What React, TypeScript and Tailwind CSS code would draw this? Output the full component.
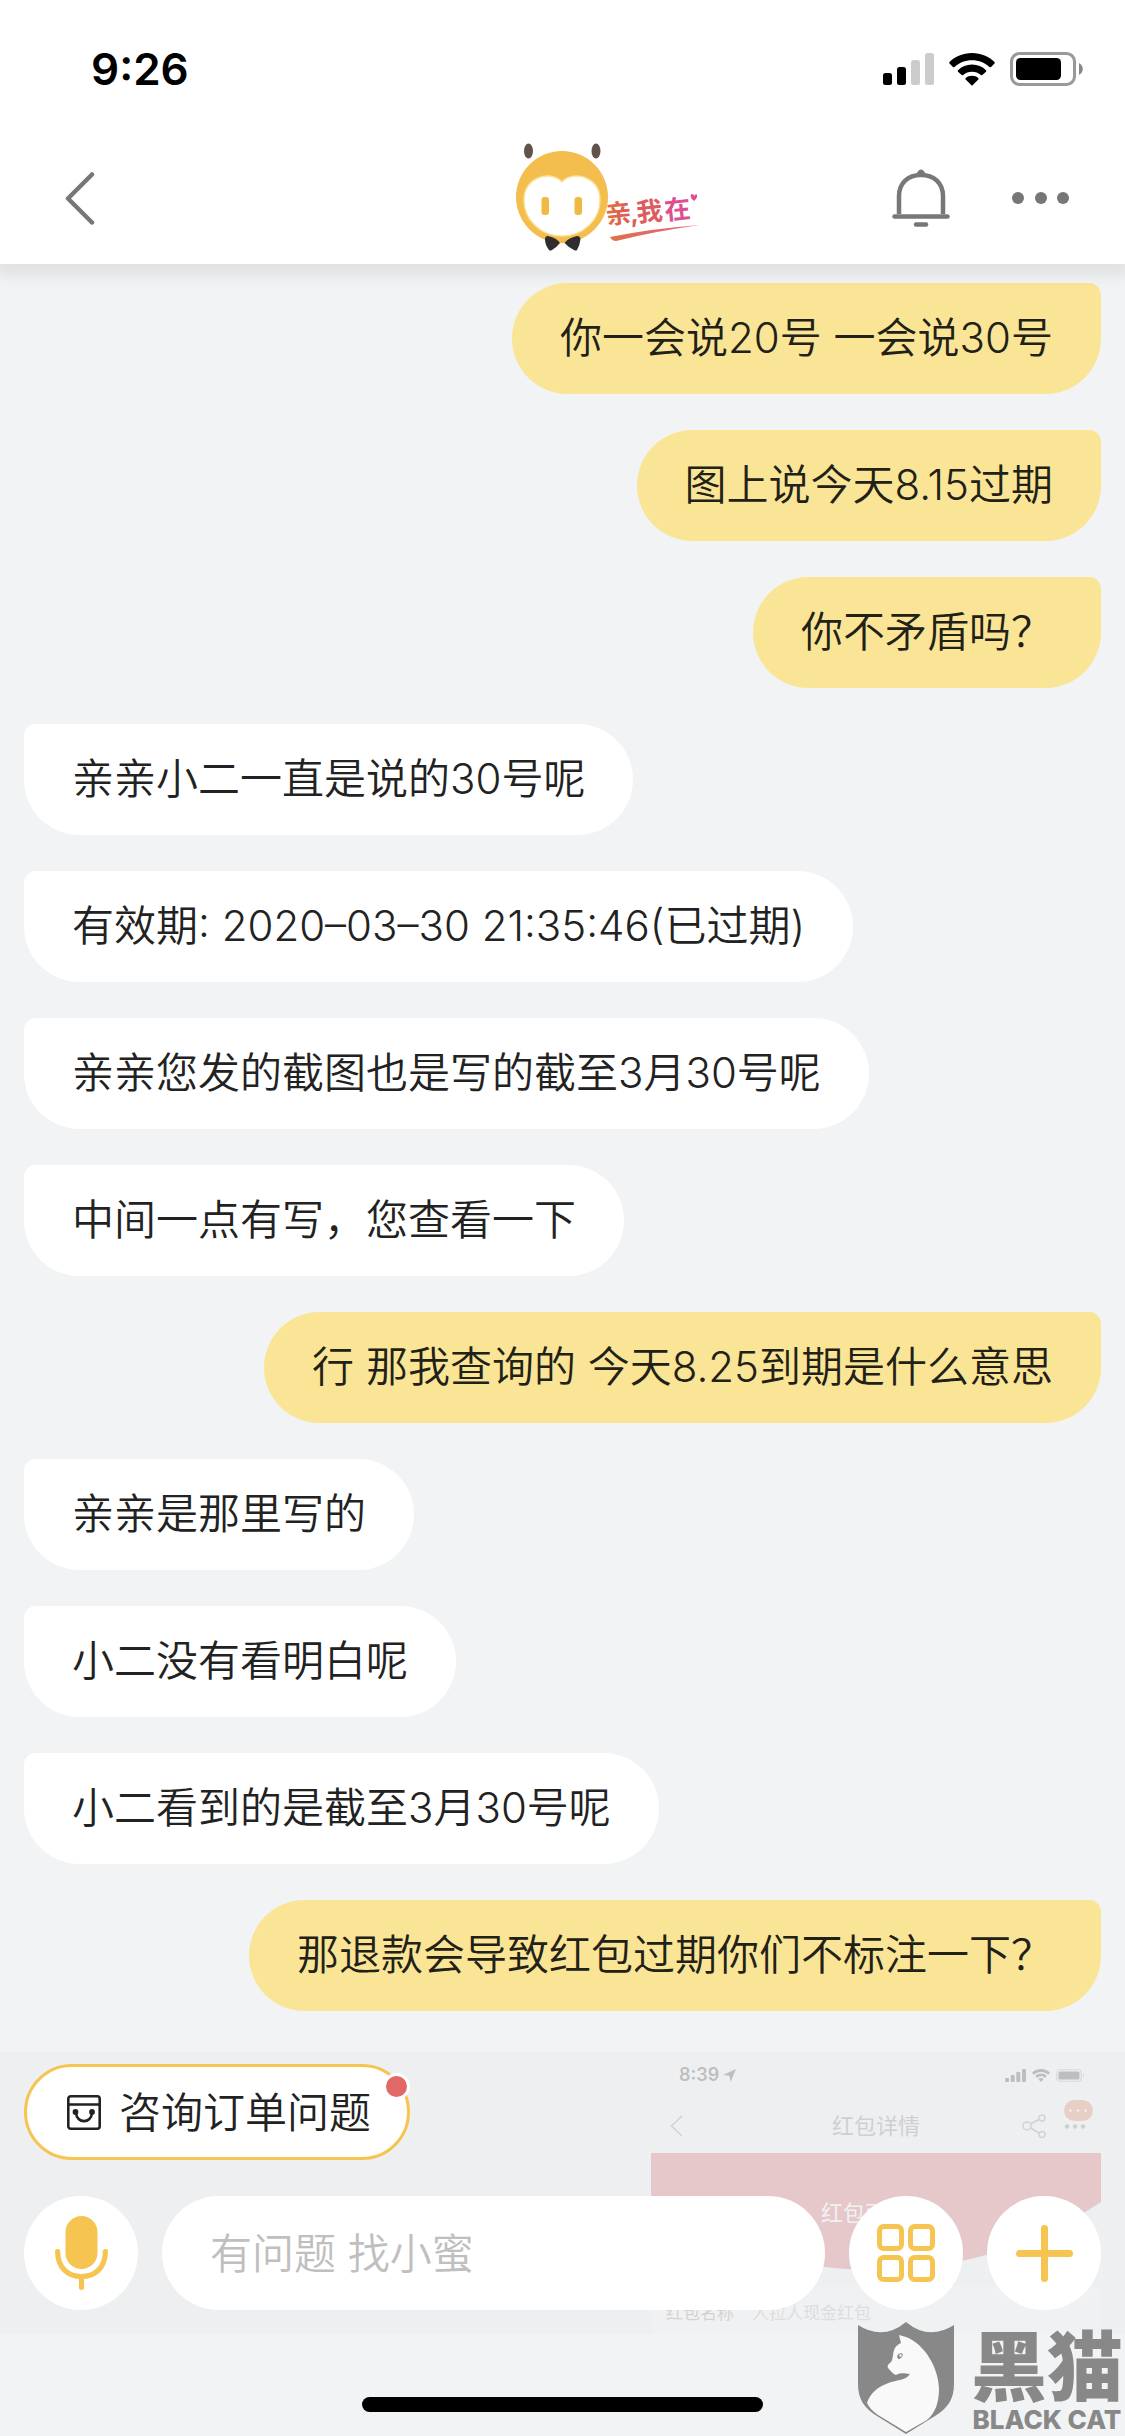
type Message = {
  text: string;
  mine?: boolean;
};

const messages: Message[] = [
  { text: "你一会说20号 一会说30号", mine: true },
  { text: "图上说今天8.15过期", mine: true },
  { text: "你不矛盾吗？", mine: true },
  { text: "亲亲小二一直是说的30号呢" },
  { text: "有效期: 2020–03–30 21:35:46(已过期)" },
  { text: "亲亲您发的截图也是写的截至3月30号呢" },
  { text: "中间一点有写，您查看一下" },
  { text: "行 那我查询的 今天8.25到期是什么意思", mine: true },
  { text: "亲亲是那里写的" },
  { text: "小二没有看明白呢" },
  { text: "小二看到的是截至3月30号呢" },
  { text: "那退款会导致红包过期你们不标注一下？", mine: true },
];

function StatusBar() {
  return (
    <div className="flex h-[132px] items-center justify-between pl-[91px] pr-[42px] pt-1.5">
      <span className="text-[44px] leading-none font-semibold text-black">9:26</span>
      <div className="flex items-center gap-[15px]">
        <svg className="h-8 w-[51px]" viewBox="0 0 51 32">
          <rect x="0" y="20" width="9" height="12" rx="2.5" fill="#000" />
          <rect x="14" y="14" width="9" height="18" rx="2.5" fill="#000" />
          <rect x="28" y="7" width="9" height="25" rx="2.5" fill="#ccc" />
          <rect x="42" y="0" width="9" height="32" rx="2.5" fill="#ccc" />
        </svg>
        <WifiIcon className="h-[33px] w-[46px]" />
        <svg className="h-[34px] w-[73px]" viewBox="0 0 73 34">
          <rect x="1.5" y="1.5" width="63" height="31" rx="8" fill="none" stroke="#999" strokeWidth="3" />
          <rect x="6" y="6" width="45" height="22" rx="4.5" fill="#000" />
          <path d="M69 11 C74 13.500 74 20.500 69 23 Z" fill="#888" />
        </svg>
      </div>
    </div>
  );
}

function WifiIcon({ className }: { className: string }) {
  return (
    <svg className={className} viewBox="0 0 46 33" fill="currentColor">
      <path d="M23 0 C32 0 40 3.500 45.500 9 Q46 9.800 45.500 10.500 L42 14 Q41.300 14.500 40.500 14 C36 9.800 30 7.300 23 7.300 S10 9.800 5.500 14 Q4.700 14.500 4 14 L.5 10.500 Q0 9.800 .5 9 C6 3.500 14 0 23 0 Z" />
      <path d="M23 11.500 C28.500 11.500 33.500 13.700 37 17.200 Q37.600 18 37 18.700 L33.300 22 Q32.600 22.500 31.900 22 C29.500 19.900 26.500 18.700 23 18.700 S16.500 19.900 14.100 22 Q13.400 22.500 12.700 22 L9 18.700 Q8.400 18 9 17.200 C12.500 13.700 17.500 11.500 23 11.500 Z" />
      <path d="M23 22.800 C25.500 22.800 27.700 23.600 29.300 25 Q29.900 25.700 29.300 26.400 L23.600 32.300 Q23 32.800 22.400 32.300 L16.700 26.400 Q16.100 25.700 16.700 25 C18.300 23.600 20.500 22.800 23 22.800 Z" />
    </svg>
  );
}

function Logo() {
  return (
    <svg className="h-[116px] w-[93px] overflow-visible" viewBox="0 0 93 116" role="img" aria-label="亲,我在">
      <defs>
        <linearGradient id="slogan" x1="0" y1="0" x2="1" y2="0">
          <stop offset="0" stopColor="#e0703c" />
          <stop offset="1" stopColor="#dd5a5c" />
        </linearGradient>
        <linearGradient id="swoosh" x1="0" y1="0" x2="1" y2="0">
          <stop offset="0" stopColor="#e07048" />
          <stop offset="1" stopColor="#e0668a" />
        </linearGradient>
      </defs>
      <circle cx="46" cy="57" r="46" fill="#f3be4e" />
      <path d="M46 42 C40 35 29 35 22 38 C13 42 8 50 8 60 C8 80 25 96 46 96 S84 80 84 60 C84 50 79 42 70 38 C63 35 52 35 46 42 Z" fill="#fff" stroke="#fbe39a" strokeWidth="1.500" />
      <rect x="25.500" y="57" width="7.500" height="18" rx="3" fill="#f0b943" />
      <rect x="58.500" y="57" width="7.500" height="18" rx="3" fill="#f0b943" />
      <ellipse cx="12.500" cy="11" rx="4.500" ry="7.500" fill="#615349" />
      <ellipse cx="80" cy="11" rx="4.500" ry="7.500" fill="#615349" />
      <path d="M32 96 Q29 96 29 99 Q29 105 33 110 Q34 111 36 110 Q41 107 44 103 Q41 98 32 96 Z" fill="#2f2d2d" />
      <path d="M61 96 Q64 96 64.500 99 Q64 105 61 110 Q60 111 58 110 Q52 107 48.500 103 Q52 98 61 96 Z" fill="#2f2d2d" />
      <g transform="rotate(-6 92 88)" fontSize="26" fontWeight="700">
        <text x="91" y="84" fill="url(#slogan)">亲</text>
        <text x="115" y="85" fill="#dd6050">,</text>
        <text x="122" y="85" fill="#de5c60">我</text>
        <text x="150" y="86" fill="#de4f91">在</text>
      </g>
      <path d="M178 61 C174 58 174 54 176 54 Q178 54 178 56 Q180 53 181 55 Q182 57 178 61 Z" fill="#de4f91" />
      <path d="M94 97 Q140 88 184 85 Q140 91 100 101 Q96 101 94 97 Z" fill="url(#swoosh)" />
    </svg>
  );
}

function Header() {
  return (
    <header className="relative z-10 bg-white shadow-[0_6px_14px_6px_rgba(0,0,0,0.07)]">
      <StatusBar />
      <nav className="grid h-[132px] grid-cols-[1fr_auto_1fr] items-center px-[53px]">
        <button type="button" aria-label="返回" className="w-fit px-3">
          <svg className="h-[53px] w-[30px]" viewBox="0 0 30 53" fill="none" stroke="#777" strokeWidth="4.500" strokeLinecap="round" strokeLinejoin="round">
            <path d="M27 2.500 L3 26.500 L27 50.500" />
          </svg>
        </button>
        <Logo />
        <div className="flex items-center justify-end gap-[62px]">
          <button type="button" aria-label="消息提醒">
            <svg className="h-[58px] w-[58px]" viewBox="0 0 58 58" fill="none" stroke="#777" strokeWidth="4.500" strokeLinecap="round">
              <path d="M7 45 V27 C7 14 16 6 29 6 S51 14 51 27 V45" strokeLinecap="butt" />
              <path d="M24.500 4.500 Q29 -3.500 33.500 4.500 Z" fill="#777" stroke="none" />
              <path d="M2.500 47.500 H55.500" />
              <path d="M24 55.500 H34" />
            </svg>
          </button>
          <button type="button" aria-label="更多">
            <svg className="h-3 w-[60px]" viewBox="0 0 60 12" fill="#777">
              <circle cx="6" cy="6" r="6" />
              <circle cx="29" cy="6" r="6" />
              <circle cx="51" cy="6" r="6" />
            </svg>
          </button>
        </div>
      </nav>
    </header>
  );
}

function Bubble({ text, mine }: Message) {
  return (
    <li
      className={
        mine
          ? "self-end rounded-[56px] rounded-tr-xl bg-[#fae596] px-12 pt-[23px] pb-[25px] text-[42px] leading-[63px] font-[350] text-[#222117]"
          : "self-start rounded-[56px] rounded-tl-xl bg-white px-12 pt-[23px] pb-[25px] text-[42px] leading-[63px] font-[350] text-[#222]"
      }
    >
      {text}
    </li>
  );
}

/* Screenshot sent by the customer, partly covered by the toolbar */
function SharedScreenshot() {
  return (
    <li className="w-[450px] self-end overflow-hidden rounded-[40px] rounded-tr-xl bg-[#f3f3f3]">
      <div className="flex h-[52px] items-center justify-between pt-1 pr-4 pl-7 text-black">
        <span className="flex items-center gap-1 text-[18px] leading-6 font-semibold">
          8:39
          <svg className="h-[13px] w-[13px]" viewBox="0 0 12 12" fill="currentColor">
            <path d="M12 0 L0 5.500 L5.800 6.300 L7 12 Z" />
          </svg>
        </span>
        <span className="flex items-center gap-1.5">
          <svg className="h-[13px] w-[21px]" viewBox="0 0 21 13" fill="currentColor">
            <rect x="0" y="9" width="4" height="4" rx="1" />
            <rect x="5.700" y="6" width="4" height="7" rx="1" />
            <rect x="11.300" y="3" width="4" height="10" rx="1" />
            <rect x="17" y="0" width="4" height="13" rx="1" />
          </svg>
          <WifiIcon className="h-[13px] w-[18px]" />
          <svg className="h-[13px] w-[29px]" viewBox="0 0 29 13">
            <rect x=".75" y=".75" width="24.500" height="11.500" rx="3" fill="none" stroke="#888" strokeWidth="1.200" />
            <rect x="2.500" y="2.500" width="21" height="8" rx="1.500" fill="#000" />
            <path d="M27 4.500 Q29.500 6.500 27 8.500 Z" fill="#888" />
          </svg>
        </span>
      </div>
      <div className="grid h-[54px] grid-cols-[1fr_auto_1fr] items-center px-1.5">
        <svg className="ml-3 h-[22px] w-[14px]" viewBox="0 0 14 22" fill="none" stroke="#666" strokeWidth="1.500">
          <path d="M13 1 L2.500 11 L13 21" />
        </svg>
        <span className="text-[22px] leading-8 text-[#555]">红包详情</span>
        <div className="flex items-center justify-end gap-[18px]">
          <svg className="h-6 w-6" viewBox="0 0 24 24" fill="none" stroke="#666" strokeWidth="1.500">
            <circle cx="5" cy="12" r="4" />
            <circle cx="20" cy="4" r="3" />
            <circle cx="20" cy="20.500" r="3" />
            <path d="M8.500 10 L17 5.500 M8.500 14 L17 19" />
          </svg>
          <svg className="h-[54px] w-[31px]" viewBox="0 0 31 54">
            <rect x="0" y="1" width="29" height="21" rx="10.500" fill="#d75723" />
            <g fill="#f3f3f3">
              <circle cx="6.500" cy="11.500" r="1.300" />
              <circle cx="14" cy="11.500" r="1.300" />
              <circle cx="21.500" cy="11.500" r="1.300" />
            </g>
            <g fill="#555">
              <circle cx="3" cy="27.500" r="2.200" />
              <circle cx="11" cy="27.500" r="2.200" />
              <circle cx="19" cy="27.500" r="2.200" />
            </g>
          </svg>
        </div>
      </div>
      <div className="relative h-[133px]">
        <svg className="absolute inset-0 h-full w-full" viewBox="0 0 450 133" preserveAspectRatio="none">
          <path d="M0 0 H450 V49 A406 406 0 0 1 0 49 Z" fill="#ca353c" />
        </svg>
        <p className="relative pt-11 text-center text-[22px] leading-8 text-white">红包面额：</p>
      </div>
      <div className="flex h-[72px] gap-[18px] bg-white px-[15px] pt-[15px] text-[17px] leading-6 text-[#666]">
        <span>红包名称</span>
        <span className="text-[#999]">人拉人现金红包</span>
      </div>
    </li>
  );
}

function Toolbar() {
  return (
    <form className="absolute inset-x-0 bottom-0 flex flex-col gap-9 bg-[#ecedef]/80 px-6 pt-3 pb-6" onSubmit={(e) => e.preventDefault()}>
      <button type="button" className="relative flex h-24 items-center gap-[18px] self-start rounded-full border-[3px] border-[#f6c451] bg-white pr-[36px] pl-10 text-[42px] font-[350] text-[#222]">
        <svg className="h-[35px] w-[34px]" viewBox="0 0 34 35" fill="none" stroke="#222" strokeWidth="2.600" strokeLinecap="round">
          <rect x="1.300" y="1.300" width="31.400" height="32.400" rx="2.500" />
          <path d="M1.300 9.500 H32.700" />
          <path d="M9 17.500 C9.500 29 24.500 29 25 17.500" />
          <circle cx="8.500" cy="17" r="1.600" fill="#222" />
          <circle cx="25" cy="17" r="1.600" fill="#222" />
        </svg>
        咨询订单问题
        <span className="absolute top-1.5 -right-[3px] h-[27px] w-[27px] rounded-full border-[3px] border-white bg-[#e26867]" />
      </button>
      <div className="flex items-center gap-6">
        <button type="button" aria-label="语音输入" className="flex size-[114px] shrink-0 items-center justify-center rounded-full bg-white">
          <svg className="h-[74px] w-[53px]" viewBox="0 0 53 74" fill="none" stroke="#f6c451" strokeWidth="5.200" strokeLinecap="round">
            <rect x="10.500" y="0" width="32" height="53" rx="16" fill="#f6c451" stroke="none" />
            <path d="M2.600 35.500 C2.600 51 12.500 60.500 26.500 60.500 S50.400 51 50.400 35.500" />
            <path d="M26.500 61 V71.300" />
          </svg>
        </button>
        <input
          type="text"
          aria-label="输入消息"
          placeholder="有问题 找小蜜"
          className="h-[114px] min-w-0 flex-1 rounded-full bg-white px-12 text-[42px] font-[350] text-[#222] outline-none placeholder:text-[#bfbfbf]"
        />
        <button type="button" aria-label="功能" className="flex size-[114px] shrink-0 items-center justify-center rounded-full bg-white">
          <svg className="size-[58px]" viewBox="0 0 58 58" fill="none" stroke="#f6c451" strokeWidth="5">
            <rect x="2.500" y="2.500" width="22" height="22" rx="4" />
            <rect x="33.500" y="2.500" width="22" height="22" rx="4" />
            <rect x="2.500" y="33.500" width="22" height="22" rx="4" />
            <rect x="33.500" y="33.500" width="22" height="22" rx="4" />
          </svg>
        </button>
        <button type="button" aria-label="添加" className="flex size-[114px] shrink-0 items-center justify-center rounded-full bg-white">
          <svg className="size-[57px]" viewBox="0 0 57 57" stroke="#f6c451" strokeWidth="7" strokeLinecap="round">
            <path d="M28.500 3.500 V53.500 M3.500 28.500 H53.500" />
          </svg>
        </button>
      </div>
    </form>
  );
}

function Watermark() {
  return (
    <div className="absolute right-0 bottom-0 z-20 flex items-end gap-4 pr-0.5 text-[#888]">
      <svg className="h-[115px] w-[98px]" viewBox="0 0 98 115">
        <path d="M1 4 Q26 20 49 1 Q72 20 97 4 V63 C97 78 91 87 78 95 L49 113 L20 95 C7 87 1 78 1 63 Z" fill="#888" />
        <path d="M42 14 L49 16 C68 23 82 48 82 68 C82 82 78 92 70 99 L49 111 L21 94 C15 90 12 86 10 82 C16 66 29 62 43 59 C48 58 51 56 53 53 C46 52 42 52 39 54 C36 53 35 51 31 47 C30 45 31 43 33 42 C37 39 35 32 38 27 C40 24 42 23 44 22 Z" fill="#f9f9f9" />
        <path d="M40 35 Q42 31 46 33 Q45 38 41 38 Z" fill="#888" />
        <circle cx="43.500" cy="34.500" r="1.200" fill="#f9f9f9" />
      </svg>
      <div className="flex flex-col items-center gap-2 pb-1">
        <span className="font-['Noto_Sans_CJK_SC',sans-serif] text-[76px] leading-[76px] font-black">黑猫</span>
        <span className="text-[26px] leading-6 font-extrabold">BLACK CAT</span>
      </div>
    </div>
  );
}

export default function App() {
  return (
    <div className="relative flex h-screen flex-col overflow-hidden bg-[#f1f3f5] font-[Inter,'Noto_Sans_CJK_SC',sans-serif]">
      <Header />

      <main className="relative min-h-0 flex-1 overflow-hidden">
        <ul className="flex flex-col gap-9 px-6 pt-[19px]">
          {messages.map((message) => (
            <Bubble key={message.text} {...message} />
          ))}
          <SharedScreenshot />
        </ul>
        <Toolbar />
      </main>

      {/* Home indicator */}
      <footer className="flex h-[102px] shrink-0 items-end justify-center pb-6">
        <div className="h-[15px] w-[401px] rounded-full bg-black" />
      </footer>

      <Watermark />
    </div>
  );
}
